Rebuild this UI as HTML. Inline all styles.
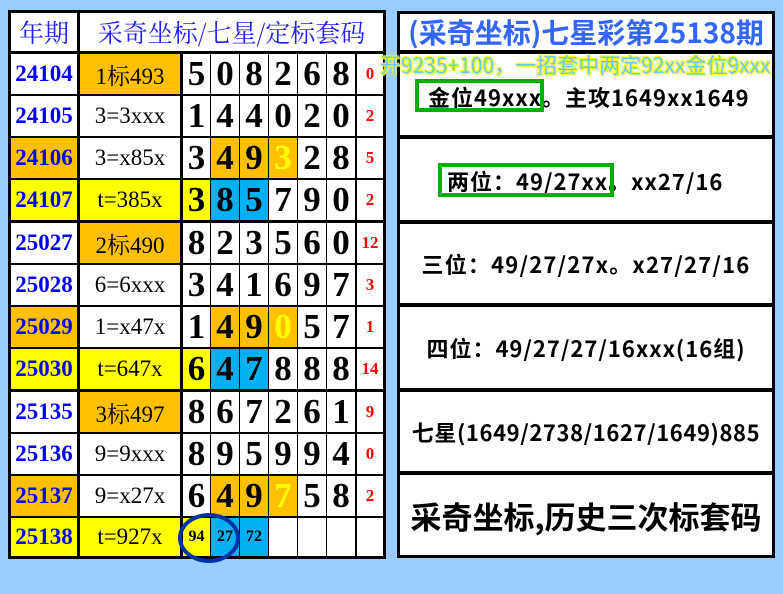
<!DOCTYPE html>
<html><head><meta charset="utf-8"><style>
*{margin:0;padding:0;box-sizing:border-box}
body{width:783px;height:594px;background:#99CCFF;position:relative;overflow:hidden;font-family:"Liberation Serif","Noto Serif CJK SC",serif}
.c{position:absolute;background:#fff;display:flex;align-items:center;justify-content:center;white-space:nowrap}
.blk{position:absolute;background:#000}
.y{color:#0000FF;font-weight:bold;font-size:23px}
.t{font-size:23px;color:#000}
.d{font-size:35px;font-weight:bold;color:#000}
.r{font-size:17px;font-weight:bold;color:#FF0000}
.o{background:#FFC000}.ye{background:#FFFF00}.cy{background:#00B0F0}
.rp{position:absolute;left:400px;width:372px;background:#fff;display:flex;align-items:center;justify-content:center;white-space:nowrap;font-family:"Noto Sans CJK SC","Liberation Sans",sans-serif;font-weight:bold;color:#000;font-size:22px;letter-spacing:1px}
.ft{position:absolute;font-family:'Noto Sans CJK SC',sans-serif;font-weight:bold;font-size:22px;letter-spacing:1px;white-space:nowrap;line-height:30px}
</style></head><body>
<div class="blk" style="left:8px;top:10px;width:378px;height:549px"></div>
<div class="c" style="left:11px;top:13px;width:66px;height:38px;color:#2020F0;font-size:25px;font-family:'Noto Serif CJK SC',serif">年期</div>
<div class="c" style="left:80px;top:13px;width:303px;height:38px;color:#2020F0;font-size:25px;font-family:'Noto Serif CJK SC',serif">采奇坐标/七星/定标套码</div>

<div class="c y" style="left:11px;top:54px;width:66px;height:40px">24104</div>
<div class="c t o" style="left:80px;top:54px;width:100px;height:40px">1标493</div>
<div class="c d" style="left:183px;top:54px;width:27px;height:40px">5</div>
<div class="c d" style="left:211px;top:54px;width:28px;height:40px">0</div>
<div class="c d" style="left:240px;top:54px;width:28px;height:40px">8</div>
<div class="c d" style="left:269px;top:54px;width:28px;height:40px">2</div>
<div class="c d" style="left:298px;top:54px;width:28px;height:40px">6</div>
<div class="c d" style="left:327px;top:54px;width:28px;height:40px">8</div>
<div class="c r" style="left:357px;top:54px;width:26px;height:40px">0</div>

<div class="c y" style="left:11px;top:96px;width:66px;height:40px">24105</div>
<div class="c t" style="left:80px;top:96px;width:100px;height:40px">3=3xxx</div>
<div class="c d" style="left:183px;top:96px;width:27px;height:40px">1</div>
<div class="c d" style="left:211px;top:96px;width:28px;height:40px">4</div>
<div class="c d" style="left:240px;top:96px;width:28px;height:40px">4</div>
<div class="c d" style="left:269px;top:96px;width:28px;height:40px">0</div>
<div class="c d" style="left:298px;top:96px;width:28px;height:40px">2</div>
<div class="c d" style="left:327px;top:96px;width:28px;height:40px">0</div>
<div class="c r" style="left:357px;top:96px;width:26px;height:40px">2</div>

<div class="c y o" style="left:11px;top:138px;width:66px;height:40px">24106</div>
<div class="c t" style="left:80px;top:138px;width:100px;height:40px">3=x85x</div>
<div class="c d" style="left:183px;top:138px;width:27px;height:40px">3</div>
<div class="c d o" style="left:211px;top:138px;width:28px;height:40px">4</div>
<div class="c d o" style="left:240px;top:138px;width:28px;height:40px">9</div>
<div class="c d o" style="left:269px;top:138px;width:28px;height:40px;color:#FFFF00">3</div>
<div class="c d" style="left:298px;top:138px;width:28px;height:40px">2</div>
<div class="c d" style="left:327px;top:138px;width:28px;height:40px">8</div>
<div class="c r" style="left:357px;top:138px;width:26px;height:40px">5</div>

<div class="c y ye" style="left:11px;top:180px;width:66px;height:40px">24107</div>
<div class="c t ye" style="left:80px;top:180px;width:100px;height:40px">t=385x</div>
<div class="c d ye" style="left:183px;top:180px;width:27px;height:40px">3</div>
<div class="c d cy" style="left:211px;top:180px;width:28px;height:40px">8</div>
<div class="c d cy" style="left:240px;top:180px;width:28px;height:40px">5</div>
<div class="c d" style="left:269px;top:180px;width:28px;height:40px">7</div>
<div class="c d" style="left:298px;top:180px;width:28px;height:40px">9</div>
<div class="c d" style="left:327px;top:180px;width:28px;height:40px">0</div>
<div class="c r" style="left:357px;top:180px;width:26px;height:40px">2</div>

<div class="c y" style="left:11px;top:223px;width:66px;height:40px">25027</div>
<div class="c t o" style="left:80px;top:223px;width:100px;height:40px">2标490</div>
<div class="c d" style="left:183px;top:223px;width:27px;height:40px">8</div>
<div class="c d" style="left:211px;top:223px;width:28px;height:40px">2</div>
<div class="c d" style="left:240px;top:223px;width:28px;height:40px">3</div>
<div class="c d" style="left:269px;top:223px;width:28px;height:40px">5</div>
<div class="c d" style="left:298px;top:223px;width:28px;height:40px">6</div>
<div class="c d" style="left:327px;top:223px;width:28px;height:40px">0</div>
<div class="c r" style="left:357px;top:223px;width:26px;height:40px">12</div>

<div class="c y" style="left:11px;top:265px;width:66px;height:40px">25028</div>
<div class="c t" style="left:80px;top:265px;width:100px;height:40px">6=6xxx</div>
<div class="c d" style="left:183px;top:265px;width:27px;height:40px">3</div>
<div class="c d" style="left:211px;top:265px;width:28px;height:40px">4</div>
<div class="c d" style="left:240px;top:265px;width:28px;height:40px">1</div>
<div class="c d" style="left:269px;top:265px;width:28px;height:40px">6</div>
<div class="c d" style="left:298px;top:265px;width:28px;height:40px">9</div>
<div class="c d" style="left:327px;top:265px;width:28px;height:40px">7</div>
<div class="c r" style="left:357px;top:265px;width:26px;height:40px">3</div>

<div class="c y o" style="left:11px;top:307px;width:66px;height:40px">25029</div>
<div class="c t" style="left:80px;top:307px;width:100px;height:40px">1=x47x</div>
<div class="c d" style="left:183px;top:307px;width:27px;height:40px">1</div>
<div class="c d o" style="left:211px;top:307px;width:28px;height:40px">4</div>
<div class="c d o" style="left:240px;top:307px;width:28px;height:40px">9</div>
<div class="c d o" style="left:269px;top:307px;width:28px;height:40px;color:#FFFF00">0</div>
<div class="c d" style="left:298px;top:307px;width:28px;height:40px">5</div>
<div class="c d" style="left:327px;top:307px;width:28px;height:40px">7</div>
<div class="c r" style="left:357px;top:307px;width:26px;height:40px">1</div>

<div class="c y ye" style="left:11px;top:349px;width:66px;height:40px">25030</div>
<div class="c t ye" style="left:80px;top:349px;width:100px;height:40px">t=647x</div>
<div class="c d ye" style="left:183px;top:349px;width:27px;height:40px">6</div>
<div class="c d cy" style="left:211px;top:349px;width:28px;height:40px">4</div>
<div class="c d cy" style="left:240px;top:349px;width:28px;height:40px">7</div>
<div class="c d" style="left:269px;top:349px;width:28px;height:40px">8</div>
<div class="c d" style="left:298px;top:349px;width:28px;height:40px">8</div>
<div class="c d" style="left:327px;top:349px;width:28px;height:40px">8</div>
<div class="c r" style="left:357px;top:349px;width:26px;height:40px">14</div>

<div class="c y" style="left:11px;top:392px;width:66px;height:40px">25135</div>
<div class="c t o" style="left:80px;top:392px;width:100px;height:40px">3标497</div>
<div class="c d" style="left:183px;top:392px;width:27px;height:40px">8</div>
<div class="c d" style="left:211px;top:392px;width:28px;height:40px">6</div>
<div class="c d" style="left:240px;top:392px;width:28px;height:40px">7</div>
<div class="c d" style="left:269px;top:392px;width:28px;height:40px">2</div>
<div class="c d" style="left:298px;top:392px;width:28px;height:40px">6</div>
<div class="c d" style="left:327px;top:392px;width:28px;height:40px">1</div>
<div class="c r" style="left:357px;top:392px;width:26px;height:40px">9</div>

<div class="c y" style="left:11px;top:434px;width:66px;height:40px">25136</div>
<div class="c t" style="left:80px;top:434px;width:100px;height:40px">9=9xxx</div>
<div class="c d" style="left:183px;top:434px;width:27px;height:40px">8</div>
<div class="c d" style="left:211px;top:434px;width:28px;height:40px">9</div>
<div class="c d" style="left:240px;top:434px;width:28px;height:40px">5</div>
<div class="c d" style="left:269px;top:434px;width:28px;height:40px">9</div>
<div class="c d" style="left:298px;top:434px;width:28px;height:40px">9</div>
<div class="c d" style="left:327px;top:434px;width:28px;height:40px">4</div>
<div class="c r" style="left:357px;top:434px;width:26px;height:40px">0</div>

<div class="c y o" style="left:11px;top:476px;width:66px;height:40px">25137</div>
<div class="c t" style="left:80px;top:476px;width:100px;height:40px">9=x27x</div>
<div class="c d" style="left:183px;top:476px;width:27px;height:40px">6</div>
<div class="c d o" style="left:211px;top:476px;width:28px;height:40px">4</div>
<div class="c d o" style="left:240px;top:476px;width:28px;height:40px">9</div>
<div class="c d o" style="left:269px;top:476px;width:28px;height:40px;color:#FFFF00">7</div>
<div class="c d" style="left:298px;top:476px;width:28px;height:40px">5</div>
<div class="c d" style="left:327px;top:476px;width:28px;height:40px">8</div>
<div class="c r" style="left:357px;top:476px;width:26px;height:40px">2</div>

<div class="c y ye" style="left:11px;top:518px;width:66px;height:38px">25138</div>
<div class="c t ye" style="left:80px;top:518px;width:100px;height:38px">t=927x</div>
<div class="c ye" style="left:183px;top:518px;width:27px;height:38px;font-size:16px;font-weight:bold">94</div>
<div class="c cy" style="left:211px;top:518px;width:28px;height:38px;font-size:16px;font-weight:bold">27</div>
<div class="c cy" style="left:240px;top:518px;width:28px;height:38px;font-size:16px;font-weight:bold">72</div>
<div class="c" style="left:269px;top:518px;width:28px;height:38px"></div>
<div class="c" style="left:298px;top:518px;width:28px;height:38px"></div>
<div class="c" style="left:327px;top:518px;width:28px;height:38px"></div>
<div class="c" style="left:357px;top:518px;width:26px;height:38px"></div>
<div style="position:absolute;left:178px;top:513px;width:62px;height:50px;border:4px solid #0033AA;border-radius:50%"></div>

<!-- right panel -->
<div class="blk" style="left:397px;top:11px;width:378px;height:547px"></div>
<div class="rp" style="top:14px;height:36px;color:#3366FF;font-size:28px;letter-spacing:0">(采奇坐标)七星彩第25138期</div>
<div class="rp" style="top:54px;height:81px"></div>
<div class="ft" style="left:428px;top:82px">金位49xxx。主攻1649xx1649</div>
<div style="position:absolute;left:415px;top:79px;width:129px;height:33px;border:4px solid #00B000"></div>
<div class="rp" style="top:139px;height:81px"></div>
<div class="ft" style="left:447px;top:166px">两位：49/27xx。xx27/16</div>
<div style="position:absolute;left:438px;top:163px;width:176px;height:34px;border:4px solid #00B000"></div>
<div class="rp" style="top:224px;height:79px;letter-spacing:1.2px">三位：49/27/27x。x27/27/16</div>
<div class="rp" style="top:307px;height:81px">四位：49/27/27/16xxx(16组)</div>
<div class="rp" style="top:392px;height:79px;font-size:22px;letter-spacing:0.6px">七星(1649/2738/1627/1649)885</div>
<div class="rp" style="top:475px;height:80px;font-size:31px;letter-spacing:0">采奇坐标,历史三次标套码</div>
<div style="position:absolute;left:380px;top:52px;font-family:'Noto Sans CJK SC','Liberation Sans',sans-serif;font-size:21px;line-height:26px;color:#66CCFF;white-space:nowrap;text-shadow:0 0 2px #FFFF00,0 0 2px #FFFF00,1px 1px 1px #FFFF00,-1px -1px 1px #FFFF00">开9235+100，一招套中两定92xx金位9xxx</div>
</body></html>
